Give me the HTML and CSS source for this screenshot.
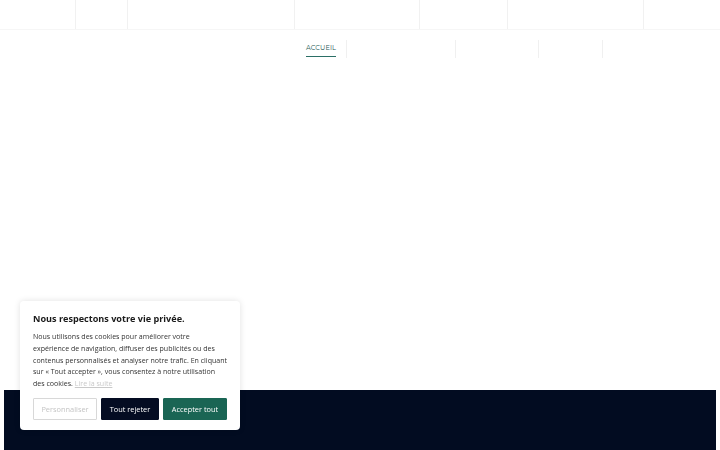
FILE: index.html
```html
<!DOCTYPE html>
<html lang="fr">
<head>
<meta charset="utf-8">
<title>Accueil</title>
<link rel="stylesheet" href="styles.css">
</head>
<body>
<header class="topbar">
  <div class="cell c1"></div>
  <div class="cell c2"></div>
  <div class="cell c3"></div>
  <div class="cell c4"></div>
  <div class="cell c5"></div>
  <div class="cell c6"></div>
  <div class="cell c7"></div>
</header>
<nav class="mainnav">
  <a class="navitem active" href="#">ACCUEIL</a>
  <span class="navitem n2"></span>
  <span class="navitem n3"></span>
  <span class="navitem n4"></span>
  <span class="navitem n5"></span>
</nav>
<main class="content"></main>
<footer class="footer"></footer>

<div class="cookie">
  <h2 class="cookie-title">Nous respectons votre vie privée.</h2>
  <p class="cookie-text">Nous utilisons des cookies pour améliorer votre<br>expérience de navigation, diffuser des publicités ou des<br>contenus personnalisés et analyser notre trafic. En cliquant<br>sur «&nbsp;Tout accepter&nbsp;», vous consentez à notre utilisation<br>des cookies. <a class="more" href="#">Lire la suite</a></p>
  <div class="cookie-actions">
    <button class="btn btn-custom">Personnaliser</button>
    <button class="btn btn-reject">Tout rejeter</button>
    <button class="btn btn-accept">Accepter tout</button>
  </div>
</div>
</body>
</html>
```
FILE: styles.css
```css
* { box-sizing: border-box; }
html, body { margin: 0; padding: 0; background: #ffffff; }
body {
  font-family: "Open Sans", "Noto Sans", sans-serif;
  color: #333;
  height: 450px;
  overflow: hidden;
}
.topbar {
  display: flex;
  height: 30px;
  border-bottom: 1px solid #f6f6f6;
}
.cell { border-right: 1px solid #f1f1f1; height: 100%; }
.c1 { width: 76px; }
.c2 { width: 52px; }
.c3 { width: 167px; }
.c4 { width: 125px; }
.c5 { width: 88px; }
.c6 { width: 136px; }
.c7 { flex: 1; border-right: none; }

.mainnav {
  display: flex;
  padding-left: 296px;
  padding-top: 10px;
  height: 60px;
}
.navitem {
  display: block;
  height: 18px;
  border-left: 1px solid #f0f0f0;
}
.navitem.active {
  border-left: none;
  width: 50px;
  padding-left: 10px;
  font-family: "Montserrat", "Noto Sans", sans-serif;
  font-size: 6.6px;
  letter-spacing: 0.1px;
  line-height: 1;
  color: #1d5a54;
  text-decoration: none;
  padding-top: 5px;
}
.navitem.active::after {
  content: "";
  display: block;
  width: 30px;
  height: 1px;
  margin-top: 4px;
  background: #2b6f66;
}
.n2 { width: 109px; }
.n3 { width: 83px; }
.n4 { width: 64px; }
.n5 { width: 40px; }

.content { height: 300px; }
.footer {
  margin: 0 4px;
  height: 60px;
  background: #020c21;
}

.cookie {
  position: fixed;
  left: 20px;
  bottom: 20px;
  width: 220px;
  padding: 11px 8px 10px 13px;
  background: #ffffff;
  border-radius: 4px;
  box-shadow: 0 0 6px rgba(0,0,0,0.12);
}
.cookie-title {
  margin: 0 0 6px 0;
  font-size: 9.1px;
  line-height: 13px;
  font-weight: 700;
  color: #1a1a1a;
}
.cookie-text {
  margin: 0 0 8px 0;
  font-size: 7.05px;
  line-height: 11.8px;
  color: #333;
  white-space: nowrap;
}
.more { color: #c9c9c9; text-decoration: underline; }
.cookie-actions { display: flex; gap: 4px; }
.btn {
  height: 22px;
  font-family: "Open Sans", "Noto Sans", sans-serif;
  font-size: 7.4px;
  border-radius: 1px;
  padding: 0;
  cursor: pointer;
}
.btn-custom {
  width: 64px;
  background: #fff;
  color: #c4c4c4;
  border: 1px solid #d8d8d8;
}
.btn-reject {
  width: 58px;
  background: #040c22;
  color: #fff;
  border: 1px solid #040c22;
}
.btn-accept {
  width: 64px;
  background: #1a6554;
  color: #fff;
  border: 1px solid #1a6554;
}
```
